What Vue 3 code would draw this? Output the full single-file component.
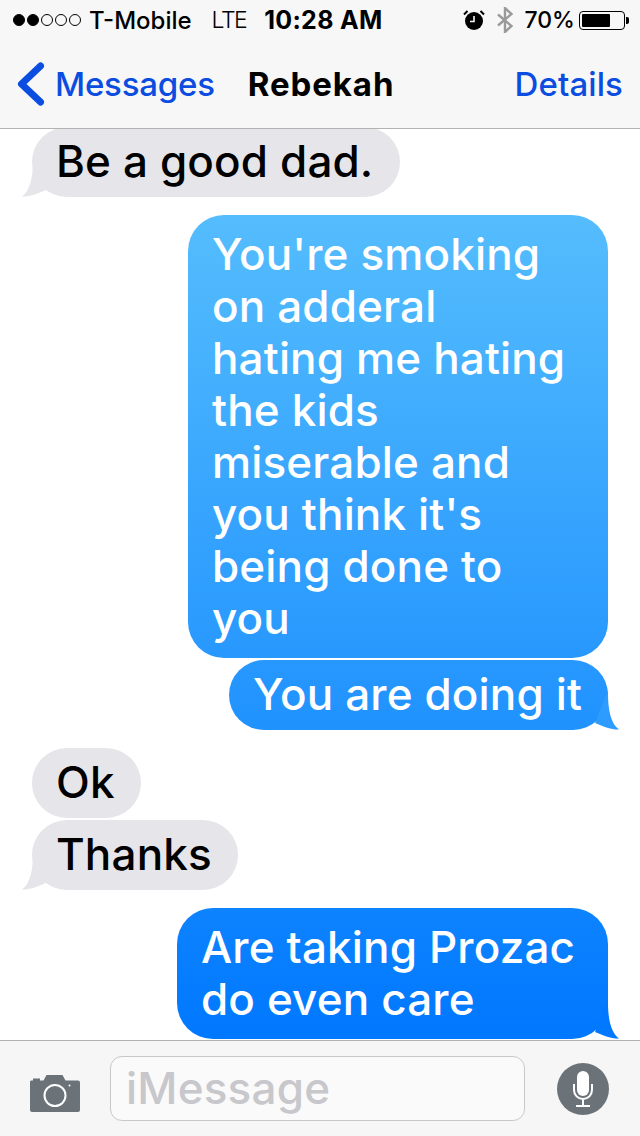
<template>
  <div class="phone">
    <header class="top">
      <div class="status">
        <div class="dots">
          <i v-for="n in 5" :key="n" class="dot" :class="{ on: n < 3 }"></i>
        </div>
        <span class="carrier">T-Mobile</span>
        <span class="net">LTE</span>
        <span class="time">10:28 AM</span>
        <svg class="alarm" viewBox="0 0 22 22" width="22" height="22">
          <circle cx="11" cy="12" r="9" fill="#000" />
          <path d="M11 7v5.500H7" fill="none" stroke="#f7f7f7" stroke-width="1.600" />
          <path d="M1 5.500 4.500 2M21 5.500 17.500 2" stroke="#000" stroke-width="2" />
        </svg>
        <svg class="bt" viewBox="0 0 18 26" width="18" height="26">
          <path d="M2 7.500 15.500 19 9 25V1l6.500 6L2 18.500" fill="none" stroke="#9a9a9a" stroke-width="2.400" />
        </svg>
        <span class="pct">70%</span>
        <div class="battery"><div class="level"></div></div>
        <i class="nub"></i>
      </div>
      <nav class="nav">
        <svg class="chev" viewBox="0 0 28 44" width="28" height="44">
          <path d="M23.500 4 4.500 22l19 18" fill="none" stroke="#0b4de0" stroke-width="7" stroke-linecap="round" stroke-linejoin="round" />
        </svg>
        <span class="link back">Messages</span>
        <span class="title">Rebekah</span>
        <span class="link details">Details</span>
      </nav>
    </header>

    <main class="thread">
      <div
        v-for="(m, i) in messages"
        :key="i"
        class="bubble"
        :class="[m.me ? 'me' : 'them', { single: m.lines.length === 1 }]"
        :style="{ marginTop: m.gap + 'px', width: m.width + 'px' }"
      >
        <div v-for="l in m.lines" :key="l">{{ l }}</div>
        <svg v-if="m.tail" class="tail" viewBox="0 0 24 40" width="24" height="40">
          <path d="M13 0v4c0 16 3 30 11 35.500C18 40 9 37 0 33Z" :fill="m.tail" />
        </svg>
      </div>
    </main>

    <footer class="bar">
      <svg class="camera" viewBox="0 0 50 38" width="50" height="38">
        <path d="M1 6.500h2V4.500h7v2h3.500l3-5.500h16l3 5.500H48a2 2 0 0 1 2 2V36a2 2 0 0 1-2 2H2a2 2 0 0 1-2-2V8.500a2 2 0 0 1 1-2Z" fill="#6b7379" />
        <circle cx="25" cy="21.500" r="10.500" fill="none" stroke="#fff" stroke-width="2" />
        <circle cx="39.500" cy="11.500" r="1" fill="#fff" />
      </svg>
      <div class="input">iMessage</div>
      <div class="mic">
        <svg viewBox="0 0 24 38" width="24" height="38">
          <rect x="6" y="1" width="12" height="25" rx="6" fill="#fff" />
          <path d="M3 14v6a9 9 0 0 0 18 0v-6M12 29v7M5 36h14" fill="none" stroke="#fff" stroke-width="2" />
        </svg>
      </div>
    </footer>
  </div>
</template>

<script setup>
// widths come from the bubbles in the screenshot, the text does not fill them evenly
const messages = [
  { lines: ['Be a good dad.'], tail: '#e5e5ea', gap: -2, width: 368 },
  {
    me: true,
    gap: 18,
    width: 420,
    lines: [
      "You're smoking",
      'on adderal',
      'hating me hating',
      'the kids',
      'miserable and',
      "you think it's",
      'being done to',
      'you'
    ]
  },
  { me: true, lines: ['You are doing it'], tail: '#2e9bff', gap: 2, width: 379 },
  { lines: ['Ok'], gap: 18, width: 109 },
  { lines: ['Thanks'], tail: '#e5e5ea', gap: 2, width: 206 },
  { me: true, lines: ['Are taking Prozac', 'do even care'], tail: '#0078ff', gap: 18, width: 431 }
]
</script>

<style>
html,
body {
  margin: 0;
  background: #fff;
}
</style>

<style scoped>
.phone {
  width: 640px;
  height: 1136px;
  display: flex;
  flex-direction: column;
  overflow: hidden;
  font-family: Inter, "Liberation Sans", sans-serif;
  background: #fff;
}

.top {
  position: relative;
  z-index: 2;
  height: 129px;
  box-sizing: border-box;
  background: #f7f7f7;
  border-bottom: 1px solid #b2b2b2;
}

.status {
  height: 40px;
  display: flex;
  align-items: center;
  padding-left: 13px;
  color: #000;
  font-size: 24px;
}

.dots {
  display: flex;
  gap: 2px;
}

.dot {
  width: 12px;
  height: 12px;
  box-sizing: border-box;
  border-radius: 50%;
  border: 1px solid #000;
}

.dot.on {
  background: #000;
}

.carrier {
  margin-left: 8px;
  font-weight: 500;
}

.net {
  margin-left: 20px;
  font-size: 23px;
  font-weight: 300;
  letter-spacing: -1.500px;
}

.time {
  margin-left: 18px;
  font-size: 25px;
  font-weight: 700;
  letter-spacing: 0.300px;
}

.alarm {
  margin-left: 81px;
}

.bt {
  margin-left: 11px;
}

.pct {
  margin-left: 10px;
  font-size: 23px;
  font-weight: 500;
}

.battery {
  width: 46px;
  height: 19px;
  box-sizing: border-box;
  margin-left: 4px;
  padding: 2px;
  border: 1px solid #000;
  border-radius: 4px;
}

.level {
  width: 70%;
  height: 100%;
  background: #000;
  border-radius: 1px;
}

.nub {
  width: 3px;
  height: 7px;
  margin-left: 1px;
  background: #000;
  border-radius: 0 2px 2px 0;
}

.nav {
  height: 88px;
  display: flex;
  align-items: center;
  padding: 0 17px;
  font-size: 33px;
}

.chev {
  margin-top: -1px;
}

.link {
  font-weight: 500;
  color: #0b4de0;
}

.back {
  margin-left: 10px;
  letter-spacing: -0.200px;
}

.title {
  margin-left: 33px;
  font-weight: 700;
  letter-spacing: 0.900px;
  color: #000;
}

.details {
  margin-left: auto;
  letter-spacing: 0.100px;
}

.thread {
  flex: 1;
  min-height: 0;
  padding: 0 32px;
  display: flex;
  flex-direction: column;
  align-items: flex-start;
  font-size: 44px;
  font-weight: 500;
  line-height: 52px;
  letter-spacing: 0.150px;
}

.bubble {
  position: relative;
  flex-shrink: 0;
  box-sizing: border-box;
  padding: 13px 0 14px 24px;
  border-radius: 36px;
  white-space: nowrap;
}

.bubble.single {
  padding-top: 8px;
  padding-bottom: 10px;
}

.them {
  background: #e5e5ea;
  color: #000;
}

.me {
  align-self: flex-end;
  color: #fff;
  background: linear-gradient(180deg, #55bdfd 215px, #0078ff 1040px) fixed;
}

.tail {
  position: absolute;
  bottom: 0;
  right: -11px;
  display: block;
}

.them .tail {
  right: auto;
  left: -10px;
  transform: scaleX(-1);
}

.bar {
  height: 96px;
  box-sizing: border-box;
  flex-shrink: 0;
  display: flex;
  align-items: center;
  padding: 0 31px 0 30px;
  background: #f6f6f6;
  border-top: 1px solid #b2b2b2;
}

.camera {
  flex-shrink: 0;
  margin-top: 8px;
}

.input {
  flex: 1;
  height: 65px;
  box-sizing: border-box;
  margin: 0 32px 0 30px;
  padding-left: 15px;
  border: 1px solid #c8c8cc;
  border-radius: 12px;
  background: #fafafa;
  color: #c7c7cc;
  font-size: 44px;
  font-weight: 500;
  line-height: 63px;
  letter-spacing: 0.200px;
}

.mic {
  width: 52px;
  height: 52px;
  flex-shrink: 0;
  border-radius: 50%;
  background: #6b7379;
  display: flex;
  align-items: center;
  justify-content: center;
}
</style>
